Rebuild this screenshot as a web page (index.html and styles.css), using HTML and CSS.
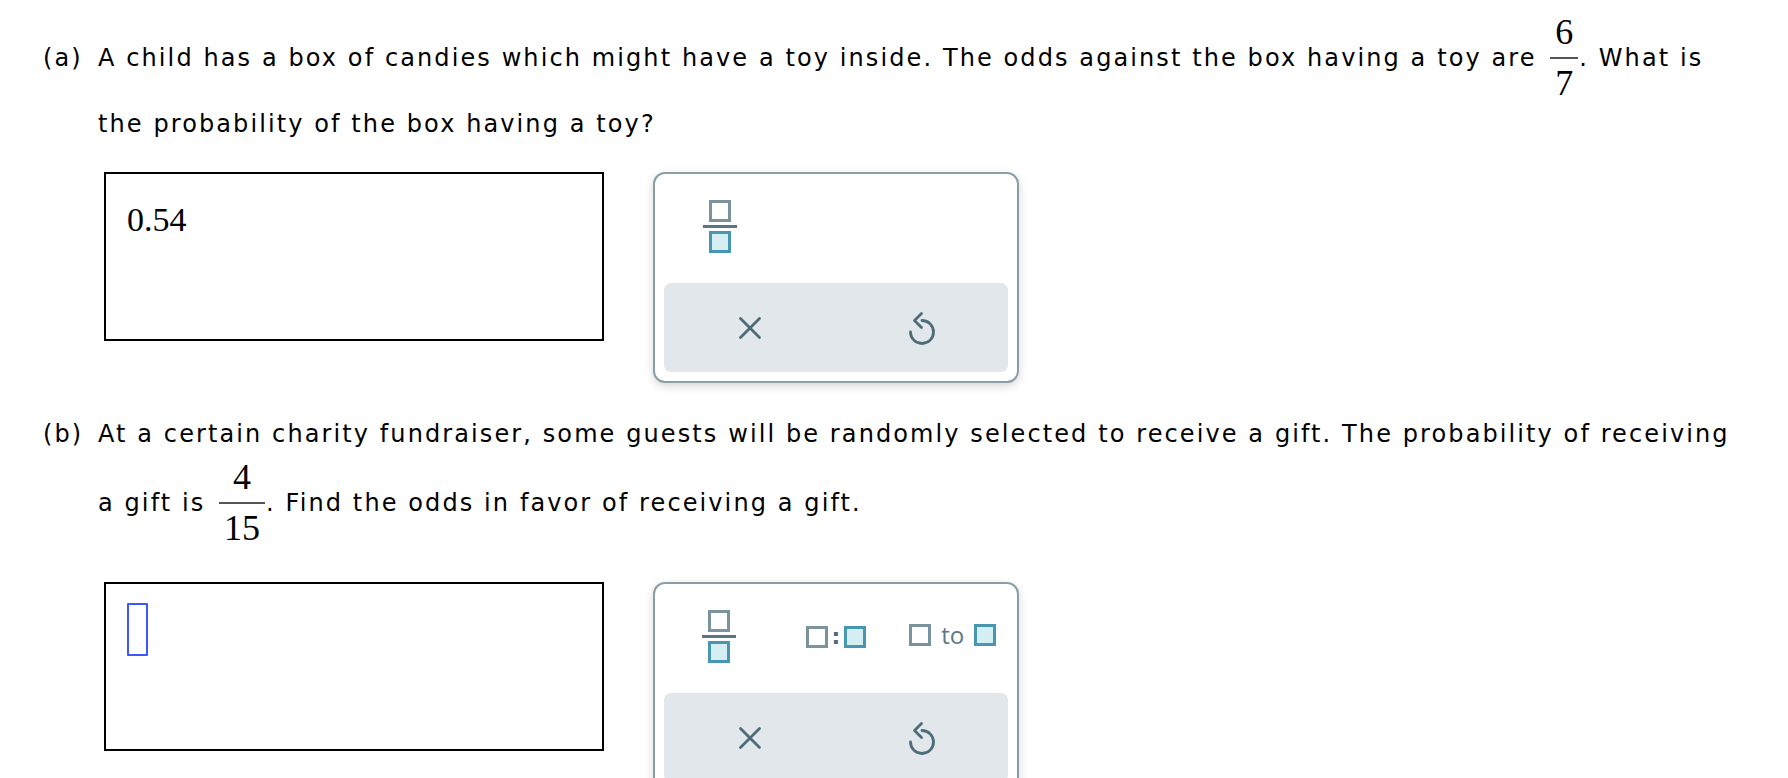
FILE: index.html
```html
<!DOCTYPE html>
<html lang="en">
<head>
<meta charset="utf-8">
<title>Odds and probability</title>
<link rel="stylesheet" href="styles.css">
</head>
<body>
<main class="page">
  <section class="part part-a">
    <div class="question">
      <span class="label">(a)</span>
      <p class="text">A child has a box of candies which might have a toy inside. The odds against the box having a toy are <span class="frac"><span class="num">6</span><span class="den">7</span></span>. What is the probability of the box having a toy?</p>
    </div>
    <div class="answer-row">
      <div class="answer-box"><span class="answer-value">0.54</span></div>
      <div class="palette">
        <div class="palette-top">
          <button class="tool" type="button" aria-label="fraction">
            <svg class="ico-frac" width="34" height="54" viewBox="0 0 34 54"><rect x="7.5" y="1.5" width="19" height="19" fill="#fff" stroke="#7b939d" stroke-width="3"/><rect x="0" y="25" width="34" height="3" fill="#5c7580"/><rect x="7.5" y="32.5" width="19" height="19" fill="#d5eef3" stroke="#4797b1" stroke-width="3"/></svg>
          </button>
        </div>
        <div class="palette-bar">
          <button class="action" type="button" aria-label="clear">
            <svg width="24" height="24" viewBox="0 0 24 24"><path d="M2.5 2.5 L21.5 21.5 M21.5 2.5 L2.5 21.5" fill="none" stroke="#4d6b78" stroke-width="2.8" stroke-linecap="round"/></svg>
          </button>
          <button class="action" type="button" aria-label="undo">
            <svg width="28" height="36" viewBox="0 0 28 36"><path d="M2.5 22 A11.5 11.5 0 1 0 14 10.5 M13.5 3.5 L6.5 10.5 L13.5 17.5" fill="none" stroke="#4d6b78" stroke-width="2.8" stroke-linecap="round" stroke-linejoin="round"/></svg>
          </button>
        </div>
      </div>
    </div>
  </section>

  <section class="part part-b">
    <div class="question">
      <span class="label">(b)</span>
      <p class="text">At a certain charity fundraiser, some guests will be randomly selected to receive a gift. The probability of receiving a gift is <span class="frac"><span class="num">4</span><span class="den">15</span></span>. Find the odds in favor of receiving a gift.</p>
    </div>
    <div class="answer-row answer-row-wide">
      <div class="answer-box"><span class="cursor"></span></div>
      <div class="palette">
        <div class="palette-top">
          <button class="tool" type="button" aria-label="fraction">
            <svg class="ico-frac" width="34" height="54" viewBox="0 0 34 54"><rect x="7.5" y="1.5" width="19" height="19" fill="#fff" stroke="#7b939d" stroke-width="3"/><rect x="0" y="25" width="34" height="3" fill="#5c7580"/><rect x="7.5" y="32.5" width="19" height="19" fill="#d5eef3" stroke="#4797b1" stroke-width="3"/></svg>
          </button>
          <button class="tool" type="button" aria-label="ratio">
            <span class="combo"><span class="sq"></span><span class="colon">:</span><span class="sq sq-teal"></span></span>
          </button>
          <button class="tool" type="button" aria-label="to">
            <span class="combo combo-to"><span class="sq"></span><span class="to">to</span><span class="sq sq-teal"></span></span>
          </button>
        </div>
        <div class="palette-bar">
          <button class="action" type="button" aria-label="clear">
            <svg width="24" height="24" viewBox="0 0 24 24"><path d="M2.5 2.5 L21.5 21.5 M21.5 2.5 L2.5 21.5" fill="none" stroke="#4d6b78" stroke-width="2.8" stroke-linecap="round"/></svg>
          </button>
          <button class="action" type="button" aria-label="undo">
            <svg width="28" height="36" viewBox="0 0 28 36"><path d="M2.5 22 A11.5 11.5 0 1 0 14 10.5 M13.5 3.5 L6.5 10.5 L13.5 17.5" fill="none" stroke="#4d6b78" stroke-width="2.8" stroke-linecap="round" stroke-linejoin="round"/></svg>
          </button>
        </div>
      </div>
    </div>
  </section>
</main>
</body>
</html>
```

FILE: styles.css
```css
html, body {
  margin: 0;
  padding: 0;
  background: #fff;
  overflow: hidden;
}

body {
  font-family: "DejaVu Sans", Verdana, sans-serif;
  color: #000;
}

.page {
  padding: 18px 0 0 43px;
}

.part-b {
  margin-top: 22px;
}

.question {
  display: flex;
  align-items: baseline;
  font-size: 24px;
  line-height: 58px;
  letter-spacing: 2.1px;
}

.label {
  width: 55px;
  flex-shrink: 0;
}

.text {
  margin: 0;
  width: 1650px;
}

.frac {
  display: inline-block;
  vertical-align: -29px;
  font-family: "Liberation Serif", "Times New Roman", serif;
  font-size: 36px;
  line-height: 28px;
  letter-spacing: 0;
  text-align: center;
  margin: 0 1px 0 4px;
}

.num {
  display: block;
  padding: 0 5px 11px;
  border-bottom: 2px solid #555;
}

.den {
  display: block;
  padding: 12px 5px 0;
  line-height: 24px;
}

.answer-row {
  display: flex;
  align-items: flex-start;
  margin: 19px 0 0 61px;
}

.answer-row-wide {
  margin-top: 42px;
}

.answer-box {
  box-sizing: border-box;
  width: 500px;
  height: 169px;
  border: 2px solid #000;
  padding: 19px 19px 19px 21px;
  font-family: "Liberation Serif", "Times New Roman", serif;
  font-size: 34px;
  line-height: 53px;
}

.answer-value {
  display: inline-block;
}

.cursor {
  display: block;
  box-sizing: border-box;
  width: 21px;
  height: 53px;
  border: 2px solid #3f55ff;
  border-radius: 1px;
}

.palette {
  box-sizing: border-box;
  width: 366px;
  margin-left: 49px;
  border: 2px solid #8b9da6;
  border-radius: 12px;
  background: #fff;
  box-shadow: 0 3px 10px rgba(0, 0, 0, 0.16);
}

.palette-top {
  display: flex;
  height: 88px;
  padding: 9px 6px 0;
}

.tool,
.action {
  border: 0;
  background: none;
  padding: 0;
  margin: 0;
  display: flex;
  align-items: center;
  justify-content: center;
}

.tool {
  width: 117px;
  height: 88px;
}

.ico-frac {
  display: block;
}

.combo {
  display: inline-flex;
  align-items: center;
}

.sq {
  display: block;
  box-sizing: border-box;
  width: 22px;
  height: 22px;
  border: 3px solid #7b939d;
  background: #fff;
}

.sq-teal {
  border-color: #4797b1;
  background: #d5eef3;
}

.colon {
  width: 16px;
  text-align: center;
  font-family: "DejaVu Sans", sans-serif;
  font-weight: bold;
  font-size: 22px;
  line-height: 22px;
  color: #4d6b78;
}

.combo-to {
  gap: 10px;
  margin-top: -4px;
}

.to {
  font-family: "Open Sans", sans-serif;
  font-size: 24px;
  line-height: 22px;
  color: #5d7883;
}

.palette-bar {
  display: flex;
  height: 89px;
  margin: 12px 9px 9px;
  background: #e1e7ea;
  border-radius: 7px;
}

.action {
  flex: 1;
  height: 89px;
}
```
